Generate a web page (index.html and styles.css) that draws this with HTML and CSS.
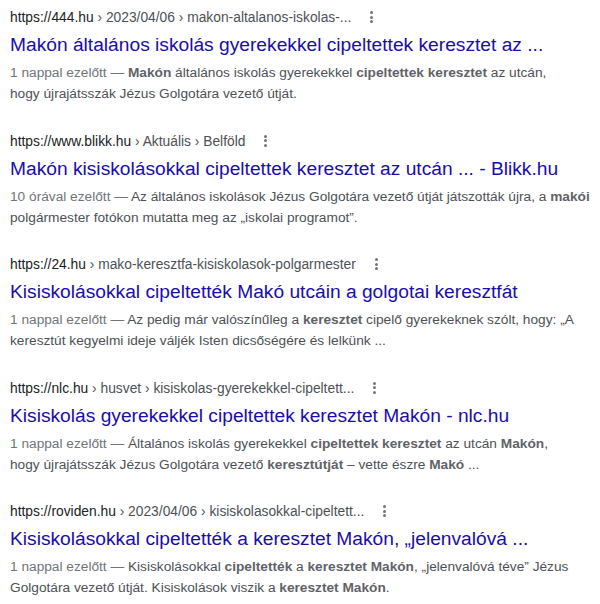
FILE: index.html
```html
<!DOCTYPE html>
<html lang="hu">
<head>
<meta charset="utf-8">
<link rel="stylesheet" href="styles.css">
</head>
<body>
<div class="results">
  <div class="result">
    <div class="url"><span class="domain">https://444.hu</span><span class="path"> › 2023/04/06 › makon-altalanos-iskolas-...</span><span class="more"><i></i><i></i><i></i></span></div>
    <h3 class="title">Makón általános iskolás gyerekekkel cipeltettek keresztet az ...</h3>
    <div class="snippet"><span class="date">1 nappal ezelőtt — </span><b>Makón</b> általános iskolás gyerekekkel <b>cipeltettek keresztet</b> az utcán,<br>hogy újrajátsszák Jézus Golgotára vezető útját.</div>
  </div>
  <div class="result">
    <div class="url"><span class="domain">https://www.blikk.hu</span><span class="path"> › Aktuális › Belföld</span><span class="more"><i></i><i></i><i></i></span></div>
    <h3 class="title">Makón kisiskolásokkal cipeltettek keresztet az utcán ... - Blikk.hu</h3>
    <div class="snippet"><span class="date">10 órával ezelőtt — </span>Az általános iskolások Jézus Golgotára vezető útját játszották újra, a <b>makói</b><br>polgármester fotókon mutatta meg az „iskolai programot”.</div>
  </div>
  <div class="result">
    <div class="url"><span class="domain">https://24.hu</span><span class="path"> › mako-keresztfa-kisiskolasok-polgarmester</span><span class="more"><i></i><i></i><i></i></span></div>
    <h3 class="title">Kisiskolásokkal cipeltették Makó utcáin a golgotai keresztfát</h3>
    <div class="snippet"><span class="date">1 nappal ezelőtt — </span>Az pedig már valószínűleg a <b>keresztet</b> cipelő gyerekeknek szólt, hogy: „A<br>keresztút kegyelmi ideje váljék Isten dicsőségére és lelkünk ...</div>
  </div>
  <div class="result">
    <div class="url"><span class="domain">https://nlc.hu</span><span class="path"> › husvet › kisiskolas-gyerekekkel-cipeltett...</span><span class="more"><i></i><i></i><i></i></span></div>
    <h3 class="title">Kisiskolás gyerekekkel cipeltettek keresztet Makón - nlc.hu</h3>
    <div class="snippet"><span class="date">1 nappal ezelőtt — </span>Általános iskolás gyerekekkel <b>cipeltettek keresztet</b> az utcán <b>Makón</b>,<br>hogy újrajátsszák Jézus Golgotára vezető <b>keresztútját</b> – vette észre <b>Makó</b> ...</div>
  </div>
  <div class="result">
    <div class="url"><span class="domain">https://roviden.hu</span><span class="path"> › 2023/04/06 › kisiskolasokkal-cipeltett...</span><span class="more"><i></i><i></i><i></i></span></div>
    <h3 class="title">Kisiskolásokkal cipeltették a keresztet Makón, „jelenvalóvá ...</h3>
    <div class="snippet"><span class="date">1 nappal ezelőtt — </span>Kisiskolásokkal <b>cipeltették</b> a <b>keresztet Makón</b>, „jelenvalóvá téve” Jézus<br>Golgotára vezető útját. Kisiskolások viszik a <b>keresztet Makón</b>.</div>
  </div>
</div>
</body>
</html>
```
FILE: styles.css
```css
html, body {
  margin: 0;
  padding: 0;
  background: #fff;
}
body {
  font-family: "Liberation Sans", Arial, sans-serif;
}
.results {
  padding: 7px 0 0 10px;
  width: 580px;
}
.result {
  margin-bottom: 26.5px;
}
.url {
  height: 22px;
  line-height: 22px;
  font-size: 13.8px;
  white-space: nowrap;
}
.domain {
  color: #202124;
}
.path {
  color: #4d5156;
}
.more {
  display: inline-flex;
  flex-direction: column;
  gap: 1.5px;
  margin-left: 19px;
  vertical-align: middle;
  position: relative;
  top: -1px;
}
.more i {
  display: block;
  width: 3px;
  height: 3px;
  border-radius: 50%;
  background: #70757a;
}
.title {
  margin: 3px 0 4px;
  font-size: 19.2px;
  line-height: 26px;
  font-weight: 400;
  color: #1a0dab;
  white-space: nowrap;
}
.snippet {
  font-size: 13.7px;
  line-height: 21px;
  color: #4d5156;
  white-space: nowrap;
}
.date {
  color: #70757a;
}
.snippet b {
  color: #5f6368;
  font-weight: 700;
}
```
